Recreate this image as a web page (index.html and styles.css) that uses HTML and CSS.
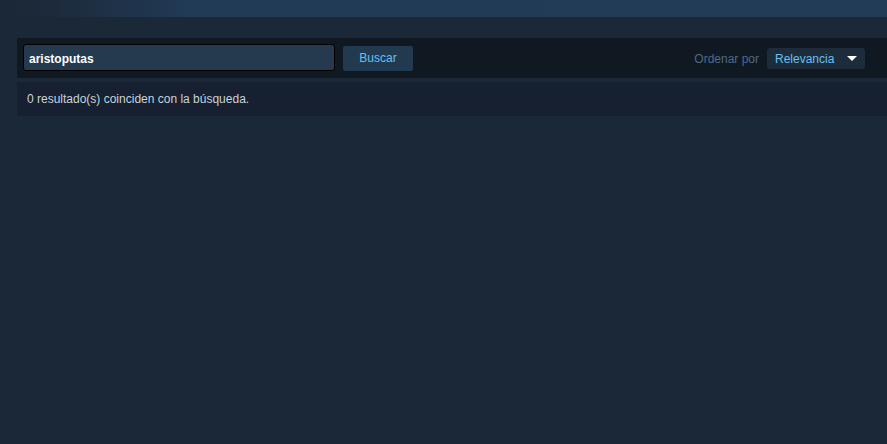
FILE: index.html
```html
<!DOCTYPE html>
<html lang="es">
<head>
<meta charset="utf-8">
<title>Búsqueda</title>
<link rel="stylesheet" href="styles.css">
</head>
<body>
<div class="topbar"></div>
<main class="page">
  <div class="searchbar">
    <div class="search-input">aristoputas</div>
    <button class="btn-search">Buscar</button>
    <div class="sort">
      <span class="sort-label">Ordenar por</span>
      <div class="dropdown">
        <span class="dropdown-value">Relevancia</span>
        <span class="dropdown-arrow"></span>
      </div>
    </div>
  </div>
  <div class="results">0 resultado(s) coinciden con la búsqueda.</div>
</main>
</body>
</html>
```

FILE: styles.css
```css
html, body {
  margin: 0;
  padding: 0;
  background: #1b2838;
  font-family: Arial, "Liberation Sans", Helvetica, sans-serif;
  height: 100%;
}
.topbar {
  height: 17px;
  background: linear-gradient(to right, #1b2838 0px, #1c2a3b 50px, #213a56 190px, #223c58 100%);
}
.page {
  padding: 21px 0 0 17px;
}
.searchbar {
  height: 40px;
  box-sizing: border-box;
  background: #101822;
  display: flex;
  align-items: flex-end;
  padding: 0 22px 7px 6px;
}
.search-input {
  width: 305px;
  height: 21px;
  padding: 4px 0 0 5px;
  border: 1px solid #000;
  border-radius: 3px;
  background: #25394f;
  color: #fff;
  font-size: 12px;
  font-weight: bold;
  line-height: 21px;
}
.btn-search {
  margin-left: 8px;
  width: 70px;
  height: 25px;
  border: none;
  border-radius: 2px;
  background: #213a4f;
  color: #66c0f4;
  font-family: inherit;
  font-size: 12px;
  padding: 0 0 1px;
}
.sort {
  margin-left: auto;
  margin-bottom: 2px;
  display: flex;
  align-items: center;
}
.sort-label {
  color: #4e6a86;
  font-size: 12px;
  margin-right: 8px;
}
.dropdown {
  width: 98px;
  height: 21px;
  box-sizing: border-box;
  background: #1c2c3b;
  border-radius: 3px;
  display: flex;
  align-items: center;
  padding: 0 8px;
}
.dropdown-value {
  color: #66c0f4;
  font-size: 12px;
}
.dropdown-arrow {
  margin-left: auto;
  width: 0;
  height: 0;
  border-left: 5px solid transparent;
  border-right: 5px solid transparent;
  border-top: 5px solid #fff;
}
.results {
  margin-top: 4px;
  height: 34px;
  background: #162030;
  display: flex;
  align-items: center;
  padding-left: 10px;
  color: #c6d4df;
  font-size: 12px;
}
```
